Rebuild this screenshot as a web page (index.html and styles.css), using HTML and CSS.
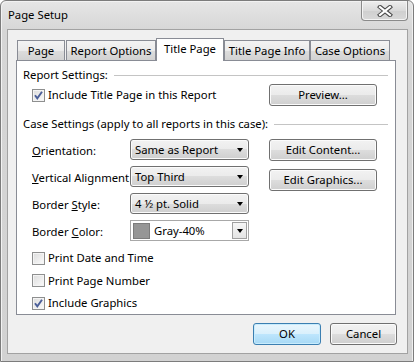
FILE: index.html
```html
<!DOCTYPE html>
<html>
<head>
<meta charset="utf-8">
<link rel="stylesheet" href="styles.css">
</head>
<body>
<div class="window">
  <div class="titlebar">
    <span class="title">Page Setup</span>
    <div class="close">
      <svg width="16" height="12" viewBox="0 0 16 12">
        <path d="M3 2 L13 10 M13 2 L3 10" stroke="#4a4a4a" stroke-width="4.2" stroke-linecap="square"/>
        <path d="M3 2 L13 10 M13 2 L3 10" stroke="#ffffff" stroke-width="2.2" stroke-linecap="square"/>
      </svg>
    </div>
  </div>
  <div class="client">
    <div class="tabs">
      <div class="tab w-page">Page</div>
      <div class="tab w-report">Report Options</div>
      <div class="tab selected w-title">Title Page</div>
      <div class="tab w-info">Title Page Info</div>
      <div class="tab w-case">Case Options</div>
    </div>
    <div class="panel">
      <div class="group"><span>Report Settings:</span><div class="rule"></div></div>
      <div class="include-row">
        <div class="check"><span class="box"><svg width="11" height="11" viewBox="0 0 11 11"><path d="M2 5.2 L4.3 8.3 L9 1.8" fill="none" stroke="#4b5f99" stroke-width="1.9"/></svg></span>Include Title Page in this Report</div>
        <button class="btn w-side">Preview...</button>
      </div>
      <div class="group g2"><span>Case Settings (apply to all reports in this case):</span><div class="rule"></div></div>
      <div class="case">
        <div class="fields">
          <div class="field"><span class="lbl"><u>O</u>rientation:</span><div class="combo">Same as Report<i class="arrow"></i></div></div>
          <div class="field"><span class="lbl"><u>V</u>ertical Alignment</span><div class="combo">Top Third<i class="arrow"></i></div></div>
          <div class="field"><span class="lbl">Border <u>S</u>tyle:</span><div class="combo">4 ½ pt. Solid<i class="arrow"></i></div></div>
          <div class="field"><span class="lbl">Border <u>C</u>olor:</span><div class="colorbox"><span class="swatch"></span><span class="ctext">Gray-40%</span><span class="dropbtn"><i class="arrow"></i></span></div></div>
        </div>
        <div class="side">
          <button class="btn w-side">Edit Content...</button>
          <button class="btn w-side">Edit Graphics...</button>
        </div>
      </div>
      <div class="checks">
        <div class="check"><span class="box"></span>Print Date and Time</div>
        <div class="check"><span class="box"></span>Print Page Number</div>
        <div class="check"><span class="box"><svg width="11" height="11" viewBox="0 0 11 11"><path d="M2 5.2 L4.3 8.3 L9 1.8" fill="none" stroke="#4b5f99" stroke-width="1.9"/></svg></span>Include Graphics</div>
      </div>
    </div>
    <div class="footer">
      <button class="btn ok">OK</button>
      <button class="btn cancel">Cancel</button>
    </div>
  </div>
</div>
</body>
</html>
```
FILE: styles.css
```css
html, body {
  margin: 0;
  padding: 0;
}
body {
  width: 414px;
  height: 362px;
  overflow: hidden;
  font-family: "Noto Sans", sans-serif;
  font-size: 11.3px;
  color: #000;
  background: #fff;
}
.window {
  box-sizing: border-box;
  width: 414px;
  height: 362px;
  border: 1px solid #7c7c7c;
  border-radius: 6px 6px 0 0;
  background: linear-gradient(#e6e6e6, #d6d6d6 30px, #d2d2d2);
  display: flex;
  flex-direction: column;
  box-shadow: inset 1px 1px 0 #f2f2f2, inset -1px 0 0 #efefef;
}
.titlebar {
  height: 28px;
  flex-shrink: 0;
  display: flex;
}
.title {
  padding: 6px 0 0 7px;
  line-height: 16px;
}
.close {
  margin-left: auto;
  margin-right: 5px;
  width: 47px;
  height: 20px;
  box-sizing: border-box;
  border: 1px solid #8a8a8a;
  border-top: none;
  border-radius: 0 0 4px 4px;
  background: linear-gradient(#eeeeee, #dadada 50%, #cfcfcf 51%, #d8d8d8);
  box-shadow: inset 0 0 0 1px #f4f4f4;
  display: flex;
  align-items: center;
  justify-content: center;
}
.client {
  flex: 1;
  margin: 0 5px 7px 6px;
  border: 1px solid #a2a2a2;
  background: #f0f0f0;
  display: flex;
  flex-direction: column;
}
.tabs {
  display: flex;
  align-items: flex-end;
  height: 22px;
  padding: 8px 0 0 9px;
}
.tab {
  box-sizing: border-box;
  height: 20px;
  border: 1px solid #898c95;
  border-bottom: none;
  background: linear-gradient(#f3f3f3, #ebebeb 50%, #dddddd 50%, #d2d2d2);
  text-align: center;
  padding-top: 2px;
  line-height: 16px;
  white-space: nowrap;
}
.tab.selected {
  height: 23px;
  margin-bottom: -1px;
  background: #fff;
  padding-top: 2px;
  position: relative;
  z-index: 1;
}
.w-page { width: 48px; }
.w-report { width: 90px; margin-left: 1px; }
.w-title { width: 68px; }
.w-info { width: 86px; }
.w-case { width: 80px; }
.panel {
  box-sizing: border-box;
  width: 380px;
  height: 255px;
  margin-left: 8px;
  border: 1px solid #898c95;
  background: #fff;
  padding: 6px 7px 0 6px;
  display: flex;
  flex-direction: column;
}
.group {
  display: flex;
  align-items: center;
  height: 16px;
  line-height: 16px;
  white-space: nowrap;
}
.group .rule {
  flex: 1;
  height: 1px;
  margin-left: 6px;
  background: #c4c4c4;
}
.g2 { margin-top: 10px; }
.include-row {
  display: flex;
  align-items: center;
  margin-top: 1px;
  padding-left: 9px;
  height: 22px;
}
.include-row .check { flex: 1; }
.include-row .btn { margin-right: 11px; }
.check {
  display: flex;
  align-items: center;
  height: 16px;
  line-height: 16px;
  white-space: nowrap;
}
.box {
  box-sizing: border-box;
  width: 13px;
  height: 13px;
  border: 1px solid #8e8f8f;
  background: linear-gradient(135deg, #dcdcdc, #fbfbfb);
  box-shadow: inset 0 0 0 1px #f4f4f4;
  margin-right: 3px;
  display: flex;
  align-items: center;
  justify-content: center;
}
.btn {
  box-sizing: border-box;
  height: 22px;
  border: 1px solid #707070;
  border-radius: 3px;
  background: linear-gradient(#f2f2f2, #ebebeb 50%, #dddddd 50%, #cfcfcf);
  box-shadow: inset 0 0 0 1px #fbfbfb;
  font: inherit;
  color: #000;
  padding: 0;
  line-height: 18px;
}
.w-side { width: 108px; }
.case {
  display: flex;
  margin-top: 7px;
  padding-left: 9px;
}
.fields {
  display: flex;
  flex-direction: column;
  gap: 6px;
}
.field {
  display: flex;
  align-items: center;
  height: 21px;
}
.lbl {
  width: 98px;
  white-space: nowrap;
  padding-top: 2px;
}
.combo {
  box-sizing: border-box;
  width: 119px;
  height: 21px;
  border: 1px solid #707070;
  border-radius: 3px;
  background: linear-gradient(#f2f2f2, #ebebeb 50%, #dddddd 50%, #cfcfcf);
  box-shadow: inset 0 0 0 1px #fbfbfb;
  display: flex;
  align-items: center;
  padding: 0 4px 0 4px;
  white-space: nowrap;
}
.arrow {
  width: 0;
  height: 0;
  border-left: 3.5px solid transparent;
  border-right: 3.5px solid transparent;
  border-top: 4px solid #000;
  margin-left: auto;
}
.combo .arrow { margin-right: 1px; }
.colorbox {
  box-sizing: border-box;
  width: 119px;
  height: 21px;
  border: 1px solid #a8a8a8;
  background: #fff;
  display: flex;
  align-items: center;
  padding: 0 1px 0 2px;
}
.swatch {
  box-sizing: border-box;
  width: 17px;
  height: 16px;
  background: #969696;
  border: 1px solid #7c7c7c;
  margin-right: 4px;
}
.ctext { flex: 1; white-space: nowrap; }
.dropbtn {
  box-sizing: border-box;
  width: 15px;
  height: 17px;
  border: 1px solid #a0a0a0;
  background: linear-gradient(#f6f6f6, #e4e4e4);
  display: flex;
  align-items: center;
  justify-content: center;
}
.dropbtn .arrow { margin: 0; }
.side {
  display: flex;
  flex-direction: column;
  gap: 8px;
  margin-left: 20px;
}
.checks {
  display: flex;
  flex-direction: column;
  gap: 6.5px;
  margin-top: 9px;
  padding-left: 9px;
}
.footer {
  display: flex;
  justify-content: flex-end;
  gap: 9px;
  margin-top: 8px;
  padding-right: 10px;
}
.ok {
  width: 68px;
  border-color: #3c7fb1;
  background: linear-gradient(#eaf6fd, #d9f0fc 50%, #bee6fd 50%, #a7d9f5);
  box-shadow: inset 0 0 0 1px #c8ecfd;
}
.cancel { width: 67px; }
```
